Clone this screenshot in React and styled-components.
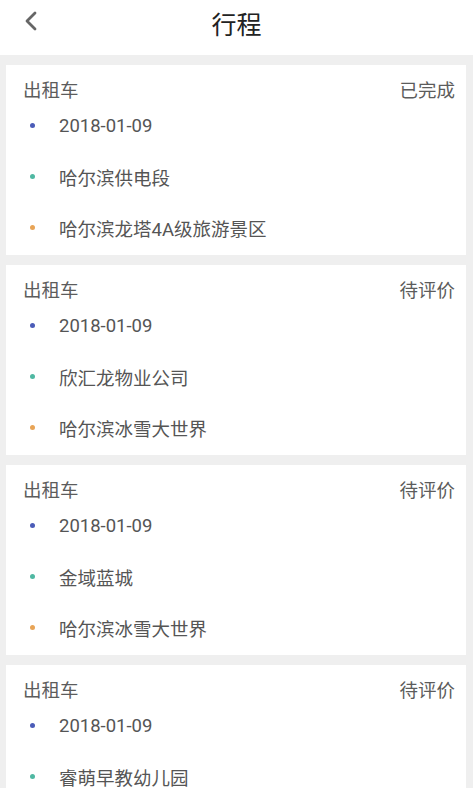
import React from "react";
import styled, { createGlobalStyle } from "styled-components";

const Global = createGlobalStyle`
  html, body { margin: 0; padding: 0; background: #efefef; }
  body { font-family: Roboto, "Noto Sans CJK SC", sans-serif; }
  * { box-sizing: border-box; }
`;

const Page = styled.div`
  width: 473px;
  background: #efefef;
  min-height: 788px;
`;

const Header = styled.header`
  height: 55px;
  background: #fff;
  display: grid;
  grid-template-columns: 60px 1fr 60px;
  align-items: center;
`;

const Back = styled.button`
  border: 0;
  background: none;
  padding: 0 0 14px 24px;
  display: flex;
  align-items: center;
  cursor: pointer;
`;

const Title = styled.h1`
  margin: 0 0 10px;
  text-align: center;
  font-size: 25px;
  font-weight: 400;
  color: #222;
`;

const List = styled.div`
  display: flex;
  flex-direction: column;
  gap: 10px;
  padding: 10px 7px 0 6px;
`;

const Card = styled.section`
  background: #fff;
  height: 190px;
  padding: 13px 11px 0 17px;
  overflow: hidden;
`;

const CardHead = styled.div`
  display: flex;
  justify-content: space-between;
  align-items: center;
  height: 22px;
  font-size: 18.5px;
  color: #5c5c5c;
`;

const Row = styled.div`
  height: 51px;
  display: flex;
  align-items: center;
  font-size: 18.5px;
  color: #555;
`;

const Dot = styled.span`
  width: 5px;
  height: 5px;
  border-radius: 50%;
  background: ${(p) => p.$color};
  margin: 0 24px 0 7px;
  flex: none;
`;

const COLORS = ["#4b5cb8", "#4fb8a2", "#e8a456"];

const trips = [
  { status: "已完成", rows: ["2018-01-09", "哈尔滨供电段", "哈尔滨龙塔4A级旅游景区"] },
  { status: "待评价", rows: ["2018-01-09", "欣汇龙物业公司", "哈尔滨冰雪大世界"] },
  { status: "待评价", rows: ["2018-01-09", "金域蓝城", "哈尔滨冰雪大世界"] },
  { status: "待评价", rows: ["2018-01-09", "睿萌早教幼儿园", "哈尔滨冰雪大世界"] },
];

export default function App() {
  return (
    <Page>
      <Global />
      <Header>
        <Back aria-label="返回">
          <svg width="14" height="20" viewBox="0 0 14 20">
            <path d="M11 2 L3 10 L11 18" fill="none" stroke="#666" strokeWidth="2.8" strokeLinecap="round" strokeLinejoin="round" />
          </svg>
        </Back>
        <Title>行程</Title>
        <span />
      </Header>
      <List>
        {trips.map((t, i) => (
          <Card key={i}>
            <CardHead>
              <span>出租车</span>
              <span>{t.status}</span>
            </CardHead>
            {t.rows.map((r, j) => (
              <Row key={j}>
                <Dot $color={COLORS[j]} />
                {r}
              </Row>
            ))}
          </Card>
        ))}
      </List>
    </Page>
  );
}
